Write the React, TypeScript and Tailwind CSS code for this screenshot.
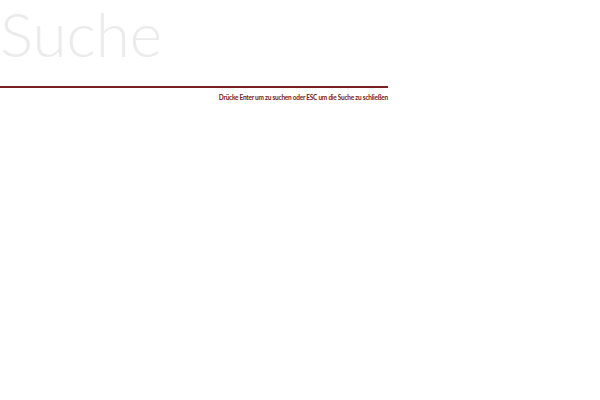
export default function App() {
  return (
    <div className="w-[388px] bg-white">
      <input
        type="text"
        placeholder="Suche"
        className="block w-full h-[88px] border-b-2 border-[#7a2020] pt-0 pb-[20px] pl-0 text-[62px] font-light leading-none text-[#333] placeholder:text-[#ebebeb] outline-none font-['Lato',sans-serif]"
      />
      <p className="mt-[7px] text-right text-[6.5px] font-bold leading-none tracking-[-0.25px] text-[#7a2020] font-['Lato',sans-serif]">
        Drücke Enter um zu suchen oder ESC um die Suche zu schließen
      </p>
    </div>
  );
}
